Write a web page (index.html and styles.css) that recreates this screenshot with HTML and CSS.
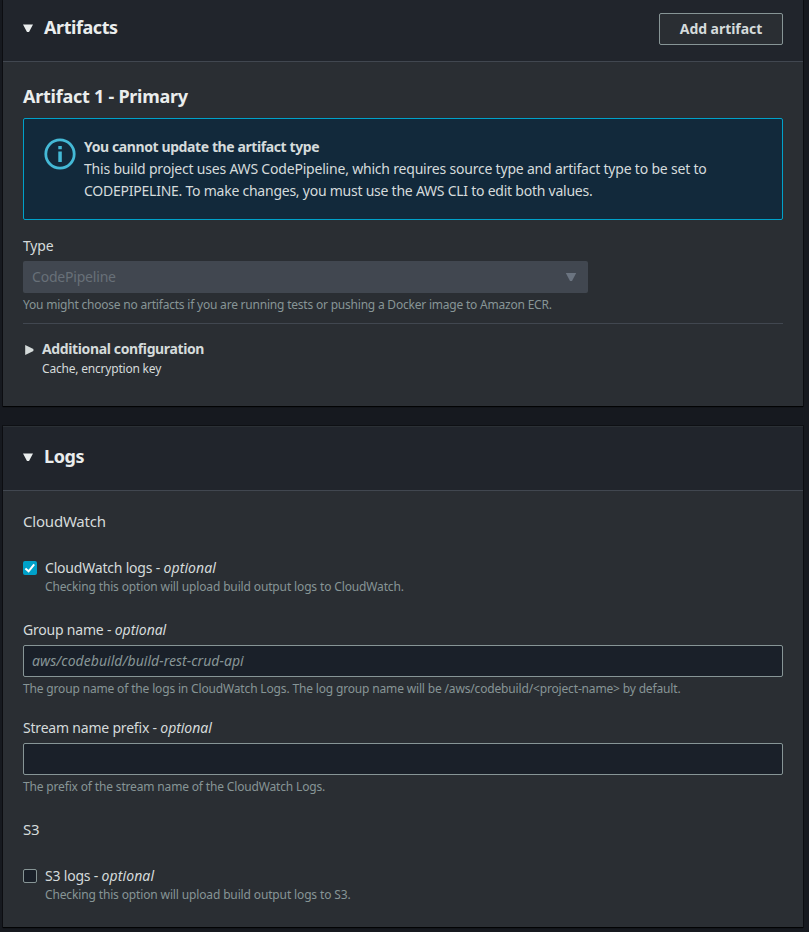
FILE: index.html
```html
<!DOCTYPE html>
<html lang="en">
<head>
<meta charset="utf-8">
<title>Edit build project</title>
<link rel="stylesheet" href="styles.css">
</head>
<body>
<main class="page">
  <section class="panel panel-artifacts">
    <header class="panel-header">
      <svg class="caret" width="10" height="9" viewBox="0 0 10 9"><path d="M0 .5h10L6 8H4z"/></svg>
      <h2>Artifacts</h2>
      <button class="btn" type="button">Add artifact</button>
    </header>
    <div class="panel-body">
      <h3 class="artifact-title">Artifact 1 - Primary</h3>
      <div class="alert">
        <svg class="info" width="32" height="32" viewBox="0 0 32 32" fill="none"><circle cx="16" cy="16" r="14.2" stroke="#44b9d6" stroke-width="2.8"/><path d="M14.3 8h3.5v3.2h-3.5zM14.3 13.5h3.5V24h-3.5z" fill="#44b9d6"/></svg>
        <div class="alert-text">
          <strong>You cannot update the artifact type</strong>
          <p>This build project uses AWS CodePipeline, which requires source type and artifact type to be set to<br><span class="tight">CODEPIPELINE. To make changes, you must use the AWS CLI to edit both values.</span></p>
        </div>
      </div>
      <div class="label label-type">Type</div>
      <div class="select"><span>CodePipeline</span><svg width="12" height="10" viewBox="0 0 12 10"><path d="M.8 1h10.4L7 9H5z" fill="#6b7480"/></svg></div>
      <p class="hint">You might choose no artifacts if you are running tests or pushing a Docker image to Amazon ECR.</p>
      <div class="expander">
        <svg class="caret-right" width="9" height="10" viewBox="0 0 9 10"><path d="M.2 0 8.4 4v2L.2 10z"/></svg>
        <div>
          <strong>Additional configuration</strong>
          <p>Cache, encryption key</p>
        </div>
      </div>
    </div>
  </section>

  <section class="panel panel-logs">
    <header class="panel-header">
      <svg class="caret" width="10" height="9" viewBox="0 0 10 9"><path d="M0 .5h10L6 8H4z"/></svg>
      <h2>Logs</h2>
    </header>
    <div class="panel-body">
      <h4 class="group">CloudWatch</h4>
      <div class="check-row">
        <span class="box checked"><svg width="14" height="14" viewBox="0 0 14 14" fill="none"><path d="M2.4 7.4 5.6 10.3 11.2 3.4" stroke="#fff" stroke-width="2"/></svg></span>
        <div>
          <div class="label">CloudWatch logs - <em>optional</em></div>
          <p class="hint">Checking this option will upload build output logs to CloudWatch.</p>
        </div>
      </div>
      <div class="field">
        <div class="label">Group name - <em>optional</em></div>
        <div class="input">aws/codebuild/build-rest-crud-api</div>
        <p class="hint">The group name of the logs in CloudWatch Logs. The log group name will be /aws/codebuild/&lt;project-name&gt; by default.</p>
      </div>
      <div class="field">
        <div class="label">Stream name prefix - <em>optional</em></div>
        <div class="input"></div>
        <p class="hint">The prefix of the stream name of the CloudWatch Logs.</p>
      </div>
      <h4 class="group group-s3">S3</h4>
      <div class="check-row">
        <span class="box"></span>
        <div>
          <div class="label">S3 logs - <em>optional</em></div>
          <p class="hint">Checking this option will upload build output logs to S3.</p>
        </div>
      </div>
    </div>
  </section>
</main>
</body>
</html>
```
FILE: styles.css
```css
* { box-sizing: border-box; margin: 0; padding: 0; }
body {
  background: #16191f;
  color: #d5dbdb;
  font: 14px/22px "Noto Sans", "Open Sans", sans-serif;
  letter-spacing: -0.2px;
  height: 932px;
  overflow: hidden;
}
.page { display: flex; flex-direction: column; gap: 20px; padding: 0 6px 0 3px; }
.panel { background: #2a2e33; box-shadow: 0 1px 1px rgba(0,0,0,.8), 0 0 0 1px rgba(0,0,0,.35); }
.panel-artifacts { height: 406px; }
.panel-logs { height: 501px; }
.panel-header {
  display: flex;
  align-items: center;
  height: 62px;
  padding: 0 20px;
  background: #21252c;
  border-bottom: 1px solid #414750;
}
.panel-artifacts .panel-header { padding-bottom: 4px; }
.panel-logs .panel-header { height: 65px; border-top: 1px solid #2b3035; padding-bottom: 2px; }
.panel-body { padding: 0 20px; }
.caret { fill: #eaeded; margin-right: 11px; }
h2, h3 { color: #eaeded; font-size: 18px; line-height: 22px; letter-spacing: -0.25px; }
h2 { letter-spacing: -0.43px; padding-bottom: 4px; }
.btn {
  margin-left: auto;
  width: 124px;
  height: 32px;
  background: #2a2e33;
  border: 1px solid #879596;
  border-radius: 2px;
  color: #d5dbdb;
  font: 700 14px/20px "Noto Sans", sans-serif;
  letter-spacing: -0.05px;
}
.artifact-title { padding-top: 23px; height: 56px; }
.alert {
  display: flex;
  height: 102px;
  padding: 17px 20px;
  background: #12293b;
  border: 1px solid #00a1c9;
  border-radius: 2px;
}
.info { margin: 2px 8px 0 0; flex: none; }
.alert-text { white-space: nowrap; }
.alert-text strong { display: block; letter-spacing: -0.4px; }
.tight { letter-spacing: -0.24px; }
.label-type { margin-top: 15px; }
.select {
  display: flex;
  align-items: center;
  justify-content: space-between;
  width: 565px;
  height: 32px;
  margin-top: 4px;
  padding: 0 11px 0 9px;
  background: #414750;
  border-radius: 2px;
  color: #687078;
}
.hint { font-size: 12px; line-height: 16px; letter-spacing: -0.16px; color: #879596; white-space: nowrap; }
.select + .hint { margin-top: 4px; letter-spacing: -0.21px; }
.expander { display: flex; margin-top: 10px; padding: 14px 0 0 2px; border-top: 1px solid #414750; }
.expander strong { display: block; letter-spacing: -0.37px; }
.expander p { font-size: 12px; line-height: 18px; }
.caret-right { fill: #d5dbdb; margin: 7px 8px 0 0; }
.group { font-size: 15px; font-weight: 400; line-height: 22px; padding-top: 19px; height: 66px; }
.group-s3 { margin-top: -16px; height: 66px; }
.label em { letter-spacing: -0.05px; }
.check-row { display: flex; gap: 8px; }
.check-row .label em { letter-spacing: 0.1px; }
.check-row .hint { letter-spacing: -0.14px; }
.box { width: 14px; height: 14px; margin-top: 4px; border: 1px solid #879596; border-radius: 2px; background: #1a2029; }
.checked { border: 0; background: #00a1c9; }
.checked svg { display: block; }
.field { height: 98px; }
.check-row + .field { margin-top: 24px; }
.input {
  height: 32px;
  margin: 4px 0;
  padding: 0 8px;
  border: 1px solid #879596;
  border-radius: 2px;
  background: #1a2029;
  color: #879596;
  font-style: italic;
  letter-spacing: 0.04px;
  line-height: 30px;
}
```
